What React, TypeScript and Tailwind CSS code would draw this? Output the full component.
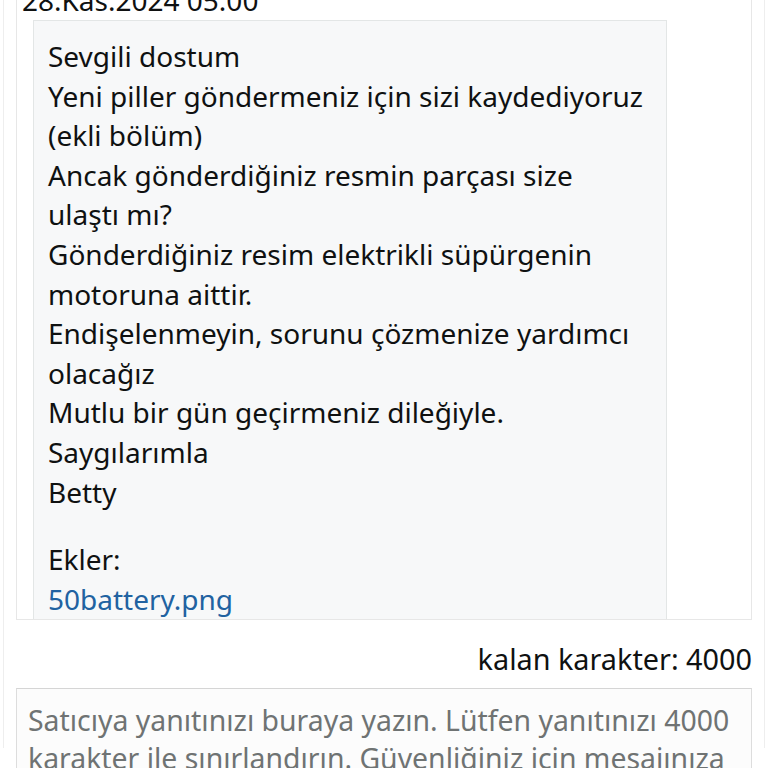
export default function App() {
  const lines = [
    "Sevgili dostum",
    "Yeni piller göndermeniz için sizi kaydediyoruz (ekli bölüm)",
    "Ancak gönderdiğiniz resmin parçası size ulaştı mı?",
    "Gönderdiğiniz resim elektrikli süpürgenin motoruna aittir.",
    "Endişelenmeyin, sorunu çözmenize yardımcı olacağız",
    "Mutlu bir gün geçirmeniz dileğiyle.",
    "Saygılarımla",
    "Betty",
  ];
  return (
    <div
      className="h-[768px] overflow-hidden bg-white text-[#0f1111]"
      style={{ fontFamily: '"Noto Sans", "Open Sans", sans-serif' }}
    >
      <div className="mx-[3px] h-full border-x border-[#eeeeee] px-[12px]">
        <div className="h-[640px] overflow-hidden border-x border-b border-[#e7e7e7] px-[16px] mt-[-20px] flex flex-col">
          <div className="text-[28px] leading-[40px] h-[40px] -ml-[11px]">28.Kas.2024 05:00</div>
          <div className="flex-1 w-[634px] border-x border-t border-[#e3e6e6] bg-[#f7f8f9] pl-[14px] pr-[16px] pt-[16px] text-[28px] leading-[39.6px]">
            {lines.map((l) => (
              <div key={l}>{l}</div>
            ))}
            <div className="h-[28px]" />
            <div>Ekler:</div>
            <div className="text-[#2162a1]">50battery.png</div>
          </div>
        </div>
        <div className="text-right text-[28.8px] leading-[40px] mt-[19px]">kalan karakter: 4000</div>
        <div className="mt-[9px] border border-[#dddddd] border-t-[#d5d5d5] bg-[#fcfcfc] pl-[11px] pr-[4px] pt-[12px] text-[28.4px] leading-[38px] text-[#6f7373]">
          Satıcıya yanıtınızı buraya yazın. Lütfen yanıtınızı 4000 karakter ile sınırlandırın. Güvenliğiniz için mesajınıza kişisel bilgi eklemeyin.
        </div>
      </div>
    </div>
  );
}
